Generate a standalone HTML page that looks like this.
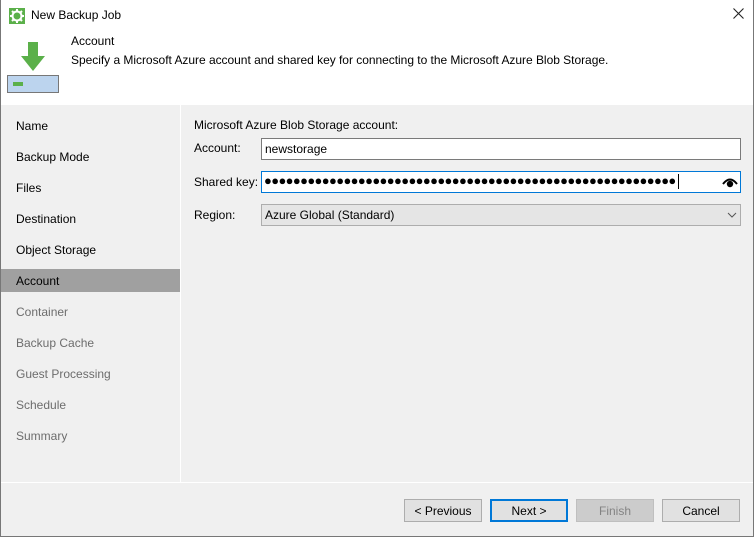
<!DOCTYPE html>
<html><head><style>
*{margin:0;padding:0;box-sizing:border-box}
body{width:754px;height:537px;overflow:hidden;font-family:"Liberation Sans",Segoe UI,sans-serif;font-size:12px;color:#000;background:#f0f0f0;position:relative}
.win{position:absolute;left:0;top:0;width:754px;height:537px;border:1px solid #777;border-top:none;}
.hdr{position:absolute;left:1px;top:0;width:752px;height:105px;background:#fff}
.abs{position:absolute;white-space:nowrap}
.nav{position:absolute;left:16px;font-size:12px}
.sel{position:absolute;left:1px;top:269px;width:179px;height:23px;background:#a0a0a0}
.inp{position:absolute;left:261px;width:480px;height:22px;border:1px solid #7a7a7a;background:#fff;padding:3px 3px;font-size:12px}
.btn{position:absolute;top:499px;width:78px;height:23px;border:1px solid #adadad;background:#e1e1e1;text-align:center;line-height:22px;font-size:12px}
</style></head><body>
<div class="hdr"></div>
<div class="win"></div>
<svg class="abs" style="left:9px;top:8px" width="16" height="16" viewBox="0 0 16 16"><rect width="16" height="16" fill="#5bb04a"/><circle cx="8" cy="8" r="4.5" fill="none" stroke="#fff" stroke-width="2"/><g stroke="#fff" stroke-width="2"><line x1="8" y1="1" x2="8" y2="4"/><line x1="8" y1="12" x2="8" y2="15"/><line x1="1" y1="8" x2="4" y2="8"/><line x1="12" y1="8" x2="15" y2="8"/><line x1="3" y1="3" x2="5" y2="5"/><line x1="11" y1="11" x2="13" y2="13"/><line x1="13" y1="3" x2="11" y2="5"/><line x1="3" y1="13" x2="5" y2="11"/></g></svg>
<div class="abs" style="left:31px;top:8px">New Backup Job</div>
<svg class="abs" style="left:733px;top:8px" width="11" height="11" viewBox="0 0 11 11"><path d="M0.5 0.5l10 10M10.5 0.5l-10 10" stroke="#222" stroke-width="1.1"/></svg>
<svg class="abs" style="left:17px;top:42px" width="32" height="32" viewBox="0 0 32 32"><path d="M11 0h10v14h7L16 29 4 14h7z" fill="#5bb04a"/></svg>
<div class="abs" style="left:7px;top:75px;width:52px;height:18px;border:1px solid #777;background:#bcd4ee"></div>
<div class="abs" style="left:13px;top:82px;width:10px;height:4px;background:#5bb04a"></div>
<div class="abs" style="left:71px;top:34px">Account</div>
<div class="abs" style="left:71px;top:53px;letter-spacing:-0.03px">Specify a Microsoft Azure account and shared key for connecting to the Microsoft Azure Blob Storage.</div>
<div class="abs" style="left:180px;top:105px;width:1px;height:377px;background:#fff"></div>
<div class="abs" style="left:1px;top:482px;width:752px;height:1px;background:#fff"></div>
<div class="sel"></div>
<div class="nav" style="top:119px">Name</div>
<div class="nav" style="top:150px">Backup Mode</div>
<div class="nav" style="top:181px">Files</div>
<div class="nav" style="top:212px">Destination</div>
<div class="nav" style="top:243px">Object Storage</div>
<div class="nav" style="top:274px">Account</div>
<div class="nav" style="top:305px;color:#6d6d6d">Container</div>
<div class="nav" style="top:336px;color:#6d6d6d">Backup Cache</div>
<div class="nav" style="top:367px;color:#6d6d6d">Guest Processing</div>
<div class="nav" style="top:398px;color:#6d6d6d">Schedule</div>
<div class="nav" style="top:429px;color:#6d6d6d">Summary</div>
<div class="abs" style="left:194px;top:118px">Microsoft Azure Blob Storage account:</div>
<div class="abs" style="left:194px;top:141px">Account:</div>
<div class="abs" style="left:194px;top:175px">Shared key:</div>
<div class="abs" style="left:194px;top:208px">Region:</div>
<div class="inp" style="top:138px">newstorage</div>
<div class="inp" style="top:171px;border-color:#0078d7;padding:1px 2px;font-size:13px;letter-spacing:-0.63px;overflow:hidden">●●●●●●●●●●●●●●●●●●●●●●●●●●●●●●●●●●●●●●●●●●●●●●●●●●●●●●●●●<span style="display:inline-block;width:1px;height:15px;background:#000;vertical-align:middle;margin-left:2px"></span></div>
<svg class="abs" style="left:722px;top:176px" width="16" height="12" viewBox="0 0 16 12"><path d="M1 8Q8 -1 15 8" fill="none" stroke="#000" stroke-width="2"/><circle cx="8" cy="8" r="3.2" fill="#000"/></svg>
<div class="inp" style="top:204px;background:#e5e5e5;border-color:#adadad">Azure Global (Standard)</div>
<svg class="abs" style="left:727px;top:212px" width="10" height="6" viewBox="0 0 10 6"><path d="M1 1l4 4 4-4" fill="none" stroke="#555"/></svg>
<div class="btn" style="left:404px">&lt; Previous</div>
<div class="btn" style="left:490px;border:2px solid #0078d7;line-height:20px">Next &gt;</div>
<div class="btn" style="left:576px;background:#ccc;border-color:#bfbfbf;color:#838383">Finish</div>
<div class="btn" style="left:662px">Cancel</div>
</body></html>
